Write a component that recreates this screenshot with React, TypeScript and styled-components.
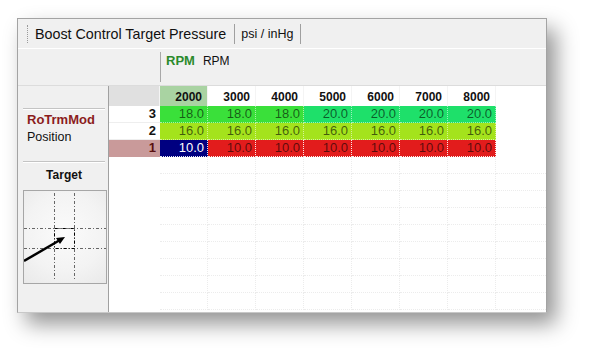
import React from "react";
import styled, { createGlobalStyle } from "styled-components";

const GlobalStyle = createGlobalStyle`
  html, body {
    margin: 0;
    background: #ffffff;
    font-family: "Liberation Sans", Arial, sans-serif;
  }
`;

const columns = [2000, 3000, 4000, 5000, 6000, 7000, 8000];

// map rows, top row first
const rows = [
  { label: "3", values: [18, 18, 18, 20, 20, 20, 20] },
  { label: "2", values: [16, 16, 16, 16, 16, 16, 16] },
  { label: "1", values: [10, 10, 10, 10, 10, 10, 10] },
];

function cellColour(v: number) {
  if (v >= 20) return "#1ee06a";
  if (v >= 18) return "#3ae03a";
  if (v >= 16) return "#a4e31c";
  return "#e21c1c";
}

const App = () => {
  return (
    <>
      <GlobalStyle />
      <Page>
        <Window>
          <Toolbar>
            <Grip />
            <Title>Boost Control Target Pressure</Title>
            <Sep />
            <Units>psi / inHg</Units>
            <Sep />
          </Toolbar>
          <AxisHeader>
            <AxisDivider />
            <AxisName>RPM</AxisName>
            <AxisUnit>RPM</AxisUnit>
          </AxisHeader>
          <Main>
            <SidePanel>
              <Rule />
              <RowAxisName>RoTrmMod</RowAxisName>
              <RowAxisUnit>Position</RowAxisUnit>
              <Rule />
              <TargetTitle>Target</TargetTitle>
              <TargetBox>
                <svg width="82" height="92" viewBox="0 0 82 92">
                  <g stroke="#666" strokeWidth="1" strokeDasharray="3 2 1 2" fill="none">
                    <line x1="30.5" y1="2" x2="30.5" y2="90" />
                    <line x1="50.5" y1="2" x2="50.5" y2="90" />
                    <line x1="0" y1="37.5" x2="82" y2="37.5" />
                    <line x1="0" y1="57.5" x2="82" y2="57.5" />
                  </g>
                  <rect
                    x="30.5"
                    y="37.5"
                    width="20"
                    height="20"
                    fill="none"
                    stroke="#000"
                    strokeDasharray="3 2 1 2"
                  />
                  <line x1="0" y1="70" x2="36" y2="49" stroke="#000" strokeWidth="2.5" />
                  <polygon points="41,46 32,47 36,53" fill="#000" />
                </svg>
              </TargetBox>
            </SidePanel>
            <GridArea>
              <Row>
                <HeadCell $bg="#e0e0e0" $label />
                {columns.map((c, i) => (
                  <HeadCell key={c} $bg={i === 0 ? "#a9d3a2" : "#ffffff"}>
                    {c}
                  </HeadCell>
                ))}
              </Row>
              {rows.map((r, ri) => {
                const selected = ri === 2;
                return (
                  <Row key={r.label}>
                    <RowLabel $selected={selected}>{r.label}</RowLabel>
                    {r.values.map((v, i) => {
                      const current = selected && i === 0;
                      return (
                        <Cell
                          key={i}
                          $bg={current ? "#000080" : cellColour(v)}
                          $current={current}
                          $selected={selected}
                        >
                          {v.toFixed(1)}
                        </Cell>
                      );
                    })}
                  </Row>
                );
              })}
              {Array.from({ length: 9 }).map((_, ri) => (
                <Row key={"e" + ri}>
                  <EmptyLabel />
                  {columns.map((c) => (
                    <EmptyCell key={c} />
                  ))}
                  <EmptyTail />
                </Row>
              ))}
            </GridArea>
          </Main>
        </Window>
      </Page>
    </>
  );
};

export default App;

const Page = styled.div`
  padding: 18px 0 0 17px;
  height: 360px;
  box-sizing: border-box;
`;

const Window = styled.div`
  width: 530px;
  height: 295px;
  box-sizing: border-box;
  background: #f0f0f0;
  border: 1px solid #a3a3a3;
  border-bottom-color: #c8c8c8;
  box-shadow: 9px 11px 20px rgba(0, 0, 0, 0.42);
  display: flex;
  flex-direction: column;
  overflow: hidden;
`;

const Toolbar = styled.div`
  height: 29px;
  display: flex;
  align-items: center;
  padding-left: 9px;
  border-bottom: 1px solid #ffffff;
`;

const Grip = styled.div`
  width: 0;
  height: 18px;
  border-left: 1px dotted #9a9a9a;
  margin-right: 7px;
`;

const Title = styled.span`
  font-size: 14.3px;
  color: #111;
  margin-right: 8px;
  white-space: nowrap;
`;

const Sep = styled.div`
  width: 0;
  height: 20px;
  border-left: 1px solid #9f9f9f;
`;

const Units = styled.span`
  font-size: 12.5px;
  color: #111;
  padding: 0 7px 0 6px;
  white-space: nowrap;
`;

const AxisHeader = styled.div`
  height: 36px;
  display: flex;
  align-items: flex-start;
  padding-left: 142px;
  border-bottom: 1px solid #dcdcdc;
`;

const AxisDivider = styled.div`
  width: 0;
  height: 30px;
  margin-top: 3px;
  border-left: 1px solid #a8a8a8;
  margin-right: 5px;
`;

const AxisName = styled.span`
  margin-top: 4px;
  font-size: 13px;
  font-weight: 700;
  color: #2b8a2b;
  margin-right: 8px;
`;

const AxisUnit = styled.span`
  margin-top: 5px;
  font-size: 12px;
  color: #111;
`;

const Main = styled.div`
  flex: 1;
  display: grid;
  grid-template-columns: 90px 1fr;
  min-height: 0;
`;

const SidePanel = styled.div`
  display: flex;
  flex-direction: column;
  padding: 22px 3px 0 5px;
`;

const Rule = styled.div`
  height: 1px;
  background: #c4c4c4;
  border-bottom: 1px solid #ffffff;
`;

const RowAxisName = styled.div`
  font-size: 13px;
  font-weight: 700;
  color: #8b1c1c;
  padding: 1px 0 0 4px;
  line-height: 17px;
`;

const RowAxisUnit = styled.div`
  font-size: 12.5px;
  color: #111;
  padding: 1px 0 15px 4px;
  line-height: 17px;
`;

const TargetTitle = styled.div`
  font-size: 12px;
  font-weight: 700;
  color: #111;
  text-align: center;
  line-height: 16px;
  padding: 4px 0 7px;
`;

const TargetBox = styled.div`
  width: 82px;
  height: 92px;
  border: 1px solid #a6a6a6;
  background: radial-gradient(circle at 50% 45%, #fbfbfb 0%, #f3f3f3 60%, #e9e9e9 100%);
  display: flex;
  overflow: hidden;
  svg {
    display: block;
  }
`;

const GridArea = styled.div`
  background: #ffffff;
  border-left: 1px solid #a0a0a0;
  display: flex;
  flex-direction: column;
  overflow: hidden;
`;

const Row = styled.div`
  display: flex;
  height: 17px;
  flex-shrink: 0;
  &:first-child {
    height: 20px;
  }
`;

const HeadCell = styled.div<{ $bg: string; $label?: boolean }>`
  width: ${(p) => (p.$label ? "51px" : "48px")};
  box-sizing: border-box;
  background: ${(p) => p.$bg};
  border-right: 1px solid #f4f4f4;
  font-size: 12px;
  font-weight: 700;
  color: #111;
  text-align: right;
  padding: 4px 5px 0 0;
  line-height: 15px;
`;

const RowLabel = styled.div<{ $selected: boolean }>`
  width: 51px;
  box-sizing: border-box;
  background: ${(p) => (p.$selected ? "#c99a9a" : "#ffffff")};
  border-bottom: 1px solid ${(p) => (p.$selected ? "#c99a9a" : "#eeeeee")};
  font-size: 13px;
  font-weight: 700;
  color: ${(p) => (p.$selected ? "#5a1010" : "#111")};
  text-align: right;
  padding-right: 4px;
  line-height: 16px;
`;

const Cell = styled.div<{ $bg: string; $current: boolean; $selected: boolean }>`
  width: 48px;
  box-sizing: border-box;
  background: ${(p) => p.$bg};
  border-right: 1px dotted
    ${(p) => (p.$selected ? "rgba(255,255,255,0.9)" : "rgba(255,255,255,0.55)")};
  border-bottom: 1px dotted
    ${(p) => (p.$selected ? "rgba(255,255,255,0.9)" : "rgba(255,255,255,0.55)")};
  font-size: 13px;
  color: ${(p) => (p.$current ? "#ffffff" : "rgba(0, 0, 0, 0.6)")};
  text-align: right;
  padding-right: 3px;
  line-height: 16px;
`;

const EmptyLabel = styled.div`
  width: 51px;
`;

const EmptyCell = styled.div`
  width: 48px;
  box-sizing: border-box;
  border-right: 1px dotted #ececec;
  border-bottom: 1px dotted #ececec;
`;

const EmptyTail = styled.div`
  flex: 1;
  border-bottom: 1px dotted #ececec;
`;
